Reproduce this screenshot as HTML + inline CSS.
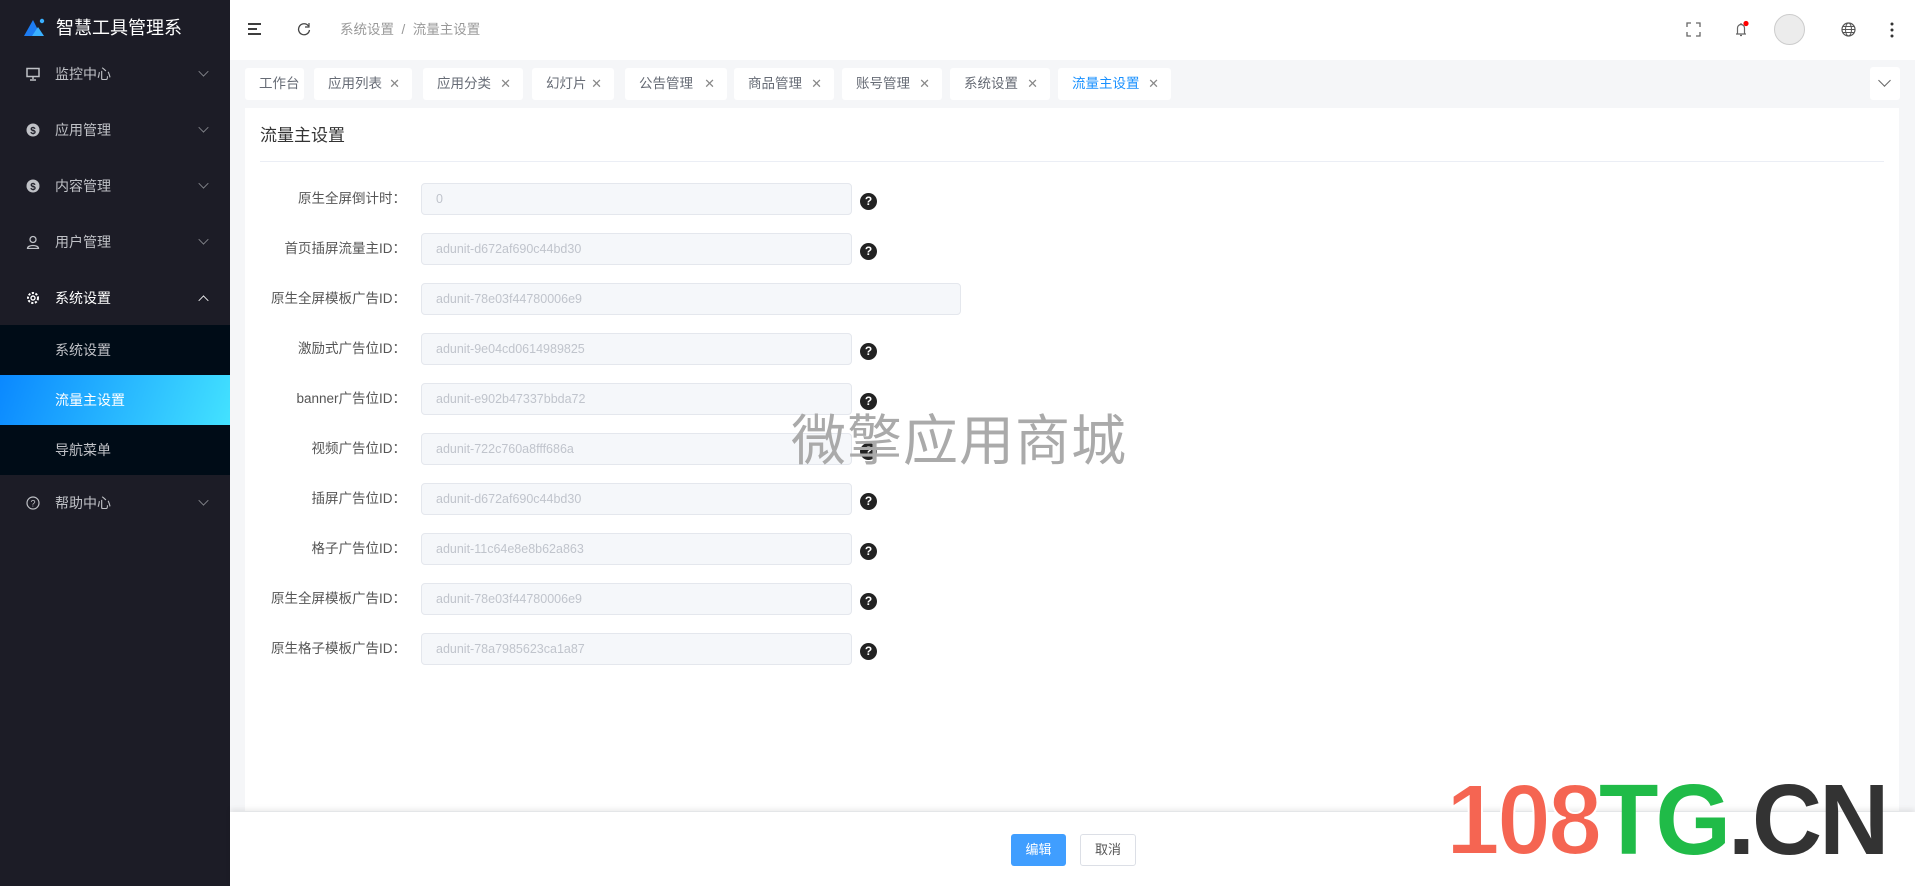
<!DOCTYPE html>
<html><head><meta charset="utf-8"><style>
*{margin:0;padding:0;box-sizing:border-box}
body{width:1915px;height:886px;overflow:hidden;background:#f5f6f8;font-family:"Liberation Sans","Noto Sans CJK SC",sans-serif;position:relative}
.abs{position:absolute}
#side{left:0;top:0;width:230px;height:886px;background:#1c1c26}
.mi{position:absolute;left:0;width:230px;height:50px;color:#bfc1c6;font-size:14px;line-height:50px}
.mi .t{position:absolute;left:55px}
.mi .ic{position:absolute;left:26px;top:18px;width:14px;height:14px}
.chev{position:absolute;left:199px;top:18px;width:9px;height:9px;border-right:1.3px solid #8b8d93;border-bottom:1.3px solid #8b8d93;transform:rotate(45deg) scale(.8)}
#hdr{left:230px;top:0;width:1685px;height:60px;background:#fff}
.tab{position:absolute;top:68px;height:32px;background:#fff;border-radius:3px;font-size:13.5px;color:#666b75;line-height:32px;padding-left:14px}
.tab .x{position:absolute;right:12px;top:0;color:#888;font-size:13px}
#card{left:245px;top:108px;width:1654px;height:703px;background:#fff}
.lbl{position:absolute;left:0;width:406px;text-align:right;font-size:13.5px;color:#555;line-height:32px;white-space:nowrap}
.inp{position:absolute;left:421px;width:431px;height:32px;background:#f5f7fa;border:1px solid #e4e7ed;border-radius:4px;color:#c0c4cc;font-size:12.5px;line-height:30px;padding-left:14px}
.q{position:absolute;left:860px;width:17px;height:17px;border-radius:50%;background:#222;color:#fff;font-size:12px;font-weight:bold;text-align:center;line-height:17px}
</style></head><body>
<div id="side" class="abs">
 <svg class="abs" style="left:24px;top:17px" width="24" height="20" viewBox="0 0 24 20"><path d="M0 19 L9 3 L17 19Z" fill="#1d7cf2"/><path d="M8 19 L14 10 L20 19Z" fill="#3ab0ff"/><circle cx="18" cy="4" r="2.2" fill="#3ab0ff"/></svg>
 <div class="abs" style="left:56px;top:14px;color:#fff;font-size:18px;line-height:28px">智慧工具管理系</div>
 <div class="mi" style="top:49px"><svg class="ic" viewBox="0 0 14 14"><rect x="1" y="1.5" width="12" height="8" fill="none" stroke="#bfc1c6" stroke-width="1.5"/><path d="M7 10v2M4 13h6" stroke="#bfc1c6" stroke-width="1.5"/></svg><span class="t">监控中心</span><i class="chev"></i></div>
 <div class="mi" style="top:105px"><svg class="ic" viewBox="0 0 14 14"><circle cx="7" cy="7" r="6.5" fill="#bfc1c6"/><text x="7" y="11" font-size="10" text-anchor="middle" fill="#1c1c26" font-weight="bold">$</text></svg><span class="t">应用管理</span><i class="chev"></i></div>
 <div class="mi" style="top:161px"><svg class="ic" viewBox="0 0 14 14"><circle cx="7" cy="7" r="6.5" fill="#bfc1c6"/><text x="7" y="11" font-size="10" text-anchor="middle" fill="#1c1c26" font-weight="bold">$</text></svg><span class="t">内容管理</span><i class="chev"></i></div>
 <div class="mi" style="top:217px"><svg class="ic" viewBox="0 0 14 14"><circle cx="7" cy="4.5" r="3" fill="none" stroke="#bfc1c6" stroke-width="1.3"/><path d="M1.5 13.5c0-4 11-4 11 0z" fill="none" stroke="#bfc1c6" stroke-width="1.3"/></svg><span class="t">用户管理</span><i class="chev"></i></div>
 <div class="mi" style="top:273px;color:#fff"><svg class="ic" viewBox="0 0 14 14"><circle cx="7" cy="7" r="5" fill="none" stroke="#fff" stroke-width="2" stroke-dasharray="2.2 1.5"/><circle cx="7" cy="7" r="2" fill="none" stroke="#fff" stroke-width="1.4"/></svg><span class="t">系统设置</span><i class="chev" style="transform:rotate(-135deg) scale(.8);top:23px;border-color:#fff"></i></div>
 <div class="abs" style="left:0;top:325px;width:230px;height:150px;background:#000c17"></div>
 <div class="mi" style="top:325px"><span class="t">系统设置</span></div>
 <div class="mi" style="top:375px;background:linear-gradient(110deg,#0a88ff,#43e2ff);color:#fff"><span class="t">流量主设置</span></div>
 <div class="mi" style="top:425px"><span class="t">导航菜单</span></div>
 <div class="mi" style="top:478px"><svg class="ic" viewBox="0 0 14 14"><circle cx="7" cy="7" r="6" fill="none" stroke="#bfc1c6" stroke-width="1.2"/><text x="7" y="10.5" font-size="9" text-anchor="middle" fill="#bfc1c6">?</text></svg><span class="t">帮助中心</span><i class="chev"></i></div>
</div>
<div id="hdr" class="abs">
 <svg class="abs" style="left:18px;top:23px" width="14" height="12"><path d="M0 1h13M0 6h9M0 11h13" stroke="#222" stroke-width="1.8"/></svg>
 <svg class="abs" style="left:67px;top:22px" width="14" height="14" viewBox="0 0 14 14"><path d="M11.5 4A5.5 5.5 0 1 0 12.5 8" fill="none" stroke="#444" stroke-width="1.3"/><path d="M12 1v4h-4" fill="none" stroke="#444" stroke-width="1.2"/></svg>
 <div class="abs" style="left:110px;top:20px;font-size:13.5px;color:#999;line-height:20px">系统设置 &nbsp;/&nbsp; 流量主设置</div>
 <svg class="abs" style="left:1456px;top:22px" width="15" height="15"><path d="M1 5V1h4M10 1h4v4M14 10v4h-4M5 14H1v-4" fill="none" stroke="#666" stroke-width="1.3"/></svg>
 <svg class="abs" style="left:1503px;top:20px" width="18" height="18"><path d="M3 14h10M4.5 14V8a3.5 3.5 0 0 1 7 0v6M7 15.5h2M8 3v1.5" fill="none" stroke="#666" stroke-width="1.2"/><circle cx="13" cy="3.5" r="2.6" fill="#f00"/></svg>
 <div class="abs" style="left:1544px;top:14px;width:31px;height:31px;border-radius:50%;background:#ececec;border:1px solid #ccc"></div>
 <svg class="abs" style="left:1611px;top:22px" width="15" height="15" viewBox="0 0 15 15"><circle cx="7.5" cy="7.5" r="6.5" fill="none" stroke="#555" stroke-width="1.2"/><ellipse cx="7.5" cy="7.5" rx="3" ry="6.5" fill="none" stroke="#555"/><path d="M1 7.5h13M2 4.5h11M2 10.5h11" stroke="#555"/></svg>
 <svg class="abs" style="left:1660px;top:22px" width="4" height="16"><circle cx="2" cy="2" r="1.5" fill="#333"/><circle cx="2" cy="8" r="1.5" fill="#333"/><circle cx="2" cy="14" r="1.5" fill="#333"/></svg>
</div>
<div class="tab" style="left:245px;width:59px">工作台</div>
<div class="tab" style="left:314px;width:98px">应用列表<span class="x">✕</span></div>
<div class="tab" style="left:423px;width:100px">应用分类<span class="x">✕</span></div>
<div class="tab" style="left:532px;width:82px">幻灯片<span class="x">✕</span></div>
<div class="tab" style="left:625px;width:102px">公告管理<span class="x">✕</span></div>
<div class="tab" style="left:734px;width:100px">商品管理<span class="x">✕</span></div>
<div class="tab" style="left:842px;width:100px">账号管理<span class="x">✕</span></div>
<div class="tab" style="left:950px;width:100px">系统设置<span class="x">✕</span></div>
<div class="tab" style="left:1058px;width:113px;color:#1890ff">流量主设置<span class="x">✕</span></div>
<div class="abs" style="left:1870px;top:67px;width:30px;height:33px;background:#fff;border-radius:3px"><i class="abs" style="left:10px;top:9px;width:9px;height:9px;border-right:1px solid #666;border-bottom:1px solid #666;transform:rotate(45deg)"></i></div>
<div id="card" class="abs">
 <div class="abs" style="left:15px;top:15px;font-size:17px;color:#333;line-height:26px">流量主设置</div>
 <div class="abs" style="left:15px;top:53px;width:1624px;height:1px;background:#ebeef5"></div>
</div>
 <div class="lbl" style="top:183px">原生全屏倒计时：</div><div class="inp" style="top:183px">0</div><div class="q" style="top:193px">?</div>
 <div class="lbl" style="top:233px">首页插屏流量主ID：</div><div class="inp" style="top:233px">adunit-d672af690c44bd30</div><div class="q" style="top:243px">?</div>
 <div class="lbl" style="top:283px">原生全屏模板广告ID：</div><div class="inp" style="top:283px;width:540px">adunit-78e03f44780006e9</div>
 <div class="lbl" style="top:333px">激励式广告位ID：</div><div class="inp" style="top:333px">adunit-9e04cd0614989825</div><div class="q" style="top:343px">?</div>
 <div class="lbl" style="top:383px">banner广告位ID：</div><div class="inp" style="top:383px">adunit-e902b47337bbda72</div><div class="q" style="top:393px">?</div>
 <div class="lbl" style="top:433px">视频广告位ID：</div><div class="inp" style="top:433px">adunit-722c760a8fff686a</div><div class="q" style="top:443px">?</div>
 <div class="lbl" style="top:483px">插屏广告位ID：</div><div class="inp" style="top:483px">adunit-d672af690c44bd30</div><div class="q" style="top:493px">?</div>
 <div class="lbl" style="top:533px">格子广告位ID：</div><div class="inp" style="top:533px">adunit-11c64e8e8b62a863</div><div class="q" style="top:543px">?</div>
 <div class="lbl" style="top:583px">原生全屏模板广告ID：</div><div class="inp" style="top:583px">adunit-78e03f44780006e9</div><div class="q" style="top:593px">?</div>
 <div class="lbl" style="top:633px">原生格子模板广告ID：</div><div class="inp" style="top:633px">adunit-78a7985623ca1a87</div><div class="q" style="top:643px">?</div>
<div class="abs" style="left:791px;top:408px;font-size:55px;color:#aaa;line-height:66px;letter-spacing:1px">微擎应用商城</div>
<div class="abs" style="left:230px;top:812px;width:1685px;height:74px;background:#fff;box-shadow:0 -3px 5px rgba(0,0,0,.08)"></div>
<div class="abs" style="left:1011px;top:834px;width:55px;height:32px;background:#409eff;border-radius:3px;color:#fff;font-size:13px;text-align:center;line-height:32px">编辑</div>
<div class="abs" style="left:1080px;top:834px;width:56px;height:32px;background:#fff;border:1px solid #dcdfe6;border-radius:3px;color:#555;font-size:13px;text-align:center;line-height:30px">取消</div>
<div class="abs" style="left:1446px;top:768px;width:469px;height:110px;overflow:hidden">
<div style="font-family:'Liberation Sans',sans-serif;font-weight:bold;font-size:100px;line-height:104px;letter-spacing:-3px;white-space:nowrap;transform:scaleX(.97);transform-origin:left"><span style="color:#f56552;-webkit-text-stroke:2px #fff">108</span><span style="color:#20bb48">TG</span><span style="color:#333">.CN</span></div>
</div>
</body></html>
